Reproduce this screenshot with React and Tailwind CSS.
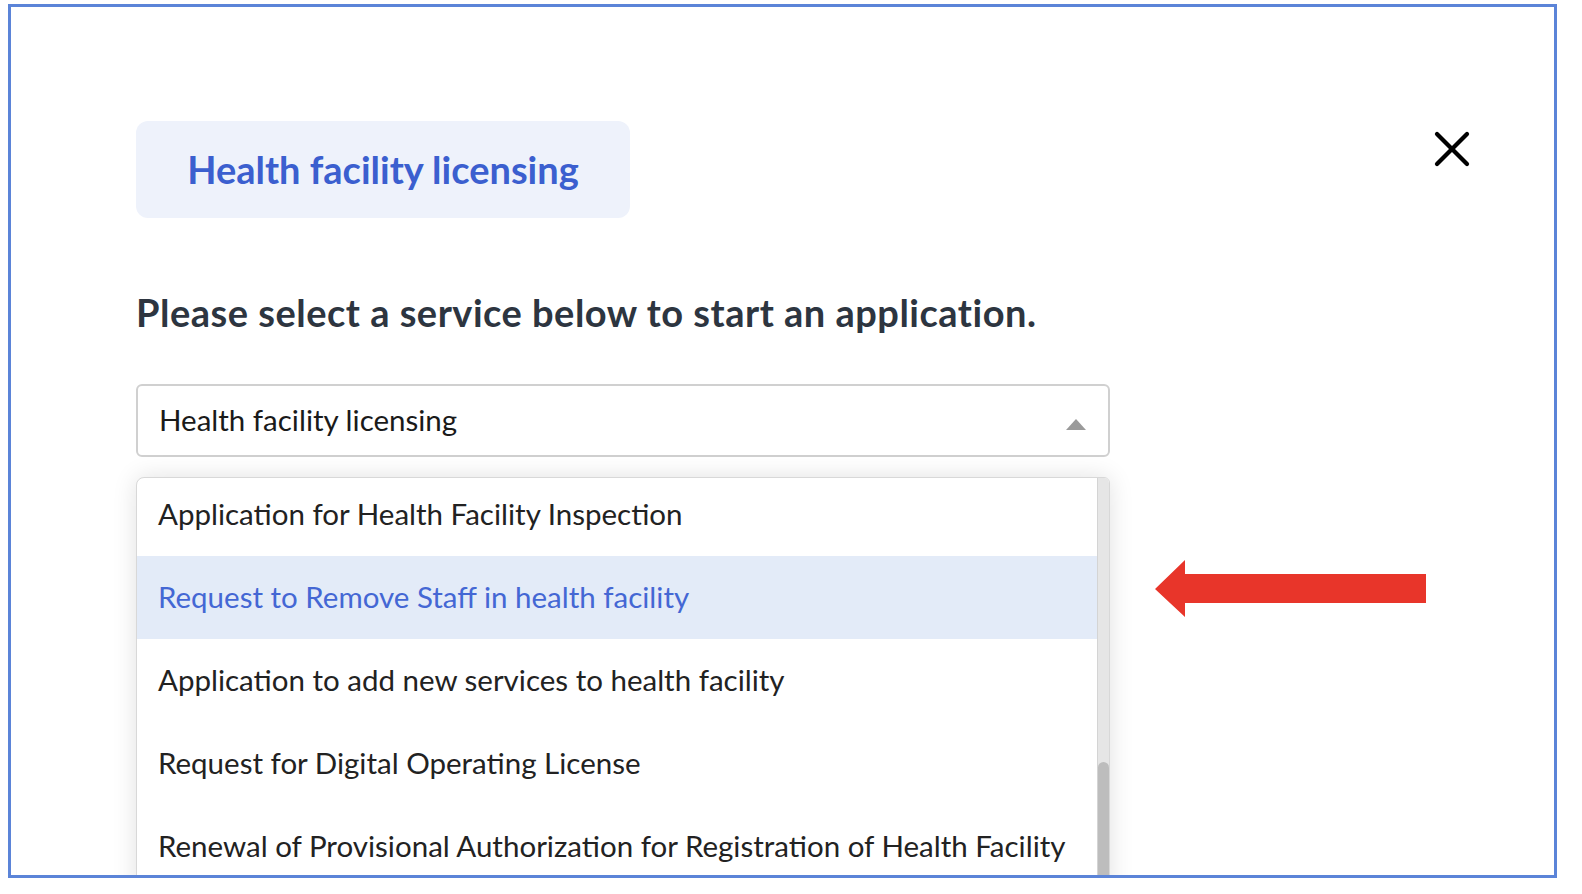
import React from 'react';
import { X } from 'lucide-react';

const services = [
  'Application for Health Facility Inspection',
  'Request to Remove Staff in health facility',
  'Application to add new services to health facility',
  'Request for Digital Operating License',
  'Renewal of Provisional Authorization for Registration of Health Facility',
];

const App = () => {
  return (
    <div className="w-[1582px] h-[894px] overflow-hidden bg-white pl-[8px] pt-[4px]" style={{ fontFamily: 'Lato, "Open Sans", sans-serif' }}>
      {/* Frame */}
      <div className="relative w-[1549px] h-[874px] border-[3px] border-[#5b84d8] overflow-hidden pl-[125px] pr-[72px] pt-[114px]">
        {/* Header */}
        <div className="flex items-start justify-between">
          <div className="w-[494px] h-[97px] rounded-xl bg-[#eef2fb] flex items-center justify-center">
            <span className="text-[38px] font-bold text-[#3b5fcf]">Health facility licensing</span>
          </div>
          <X className="w-[60px] h-[60px] mt-[-2px] text-black" strokeWidth={1.7} />
        </div>

        {/* Heading */}
        <h1 className="mt-[71px] text-[38px] leading-[46px] tracking-[0.5px] font-bold text-[#2d3540]">
          Please select a service below to start an application.
        </h1>

        {/* Select */}
        <div className="mt-[49px] w-[974px] h-[73px] rounded-md border-2 border-[#d0d0d0] flex items-center justify-between pl-[21px] pr-[22px]">
          <span className="text-[29.5px] text-[#1a1a1a]">Health facility licensing</span>
          <div className="w-0 h-0 border-l-[10px] border-r-[10px] border-b-[11px] border-l-transparent border-r-transparent border-b-[#9a9a9a] mt-[8px]" />
        </div>

        {/* Dropdown list */}
        <div className="mt-[20px] w-[974px] h-[420px] rounded-tl-lg rounded-tr-md border border-[#d8d8d8] shadow-[0_0_24px_rgba(0,0,0,0.12)] bg-white overflow-hidden flex">
          <div className="flex-1 mt-[-5px]">
            {services.map((s, i) => (
              <div
                key={s}
                className={
                  i === 1
                    ? 'h-[83px] flex items-center pl-[21px] bg-[#e3ebf8] text-[29.5px] text-[#4467d4]'
                    : 'h-[83px] flex items-center pl-[21px] text-[29.5px] text-[#222]'
                }
              >
                {s}
              </div>
            ))}
          </div>
          <div className="w-[12px] bg-[#e6e6e6] border-l border-[#d4d4d4] flex flex-col">
            <div className="h-[284px]" />
            <div className="flex-1 bg-[#bdbdbd] rounded-t-md" />
          </div>
        </div>

        {/* Annotation arrow */}
        <svg className="absolute left-[1143px] top-[552px]" width="273" height="59" viewBox="0 0 273 59">
          <polygon points="1,30 31,1 31,15 272,15 272,44 31,44 31,58" fill="#e8352a" />
        </svg>
      </div>
    </div>
  );
};

export default App;
